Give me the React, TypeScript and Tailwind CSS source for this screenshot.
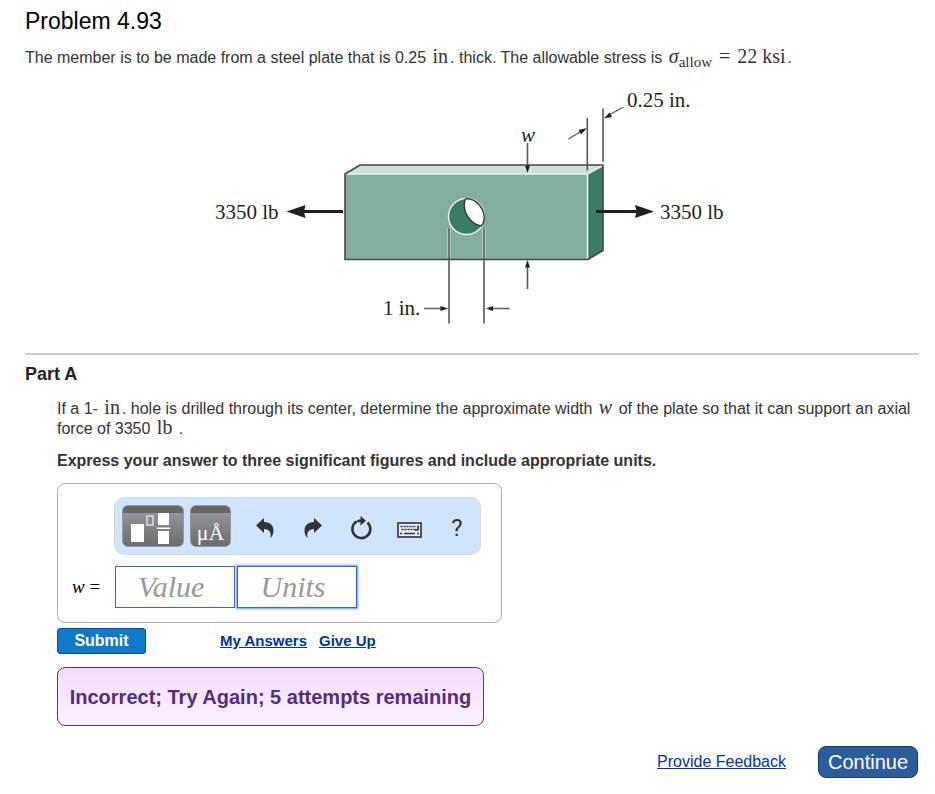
import type { ReactNode } from "react";

const serif = "font-['Liberation_Serif',serif]";

function Roman({ children }: { children: ReactNode }) {
  return <span className={`${serif} mx-[2px] text-[20px] leading-[0px]`}>{children}</span>;
}

function PlateDiagram() {
  const thin = { stroke: "#5a5758", strokeWidth: 1.6, fill: "none" };
  const label = "font-['Liberation_Serif',serif] text-[21px]";
  return (
    <svg
      role="img"
      aria-label="Steel plate with a central hole under axial load"
      viewBox="214 82 516 248"
      className="w-[516px] h-[248px] max-w-full"
    >
      {/* plate faces */}
      <path d="M345 174 L360 165 H603 L588 174 Z" fill="#cfe0d8" />
      <path d="M345 174 H588 V259.500 H345 Z" fill="#82ae9d" />
      <path d="M588 174 L603 165 V250.500 L588 259.500 Z" fill="#3a7d66" />
      <path d="M345 174 H587.500 L603 165.500 M587.500 174 V259" stroke="#edf5f1" strokeWidth="1.600" fill="none" />
      <path d="M345 174 L360 165 H603 V250.500 L588 259.500 H345 Z" stroke="#4a4546" strokeWidth="1.600" fill="none" />
      {/* hole */}
      <circle cx="466.500" cy="216.500" r="18" fill="#3a7d66" stroke="#e4f0ea" strokeWidth="1.500" />
      <path d="M466 198.500 C476 198.500 486 209 484 221 Q483 225 480.500 226 C469 223 462 211 465 200 Z" fill="#fff" stroke="#3f3b3c" strokeWidth="1.500" />
      {/* hole width */}
      <path d="M449 228 V258 M484 228 V258" stroke="#d5e5dd" strokeWidth="3" />
      <path d="M449 228 V323.500 M484 228 V323.500" {...thin} />
      <path d="M424 308.500 H445 M509.500 308.500 H490" {...thin} strokeWidth="1.300" />
      <path d="M448 308.500 L440.500 306 V311 Z M486 308.500 L493 306 V311 Z" fill="#231f20" />
      {/* height w */}
      <path d="M527.500 143 V168 M527.500 289 V264" {...thin} />
      <path d="M527.500 173 L525 165.500 H530 Z M527.500 260 L525 267.500 H530 Z" fill="#231f20" />
      {/* thickness */}
      <path d="M587.300 118 V170.500 M603 108.500 V162" {...thin} />
      <path d="M568.500 139 L580 132 M623.500 107 L610 114.500" {...thin} strokeWidth="1.400" />
      <path d="M587 128 L578.500 130 L581 134.500 Z M604 118.500 L609.500 112.500 L612 117 Z" fill="#231f20" />
      {/* axial forces */}
      <path d="M343 211.500 H303 M596 211.500 H637" stroke="#231f20" strokeWidth="3" />
      <path d="M286.500 211.500 L305.500 205 L304 211.500 L305.500 218 Z M654 211.500 L635 205 L636.500 211.500 L635 218 Z" fill="#231f20" />
      <g fill="#231f20" className={label}>
        <text x="627" y="107">0.25 in.</text>
        <text x="215" y="219">3350 lb</text>
        <text x="660" y="219">3350 lb</text>
        <text x="383" y="315">1 in.</text>
        <text x="521" y="142" fontStyle="italic">w</text>
      </g>
    </svg>
  );
}

function TemplateIcon() {
  return (
    <svg viewBox="0 0 60 40" className="w-[60px] h-[40px]" aria-hidden="true">
      <path d="M8 18h13v18H8z M35 7h11v12H35z M35 25h11v13H35z M34 21.500h13v1.500H34z" fill="#fff" />
      <path d="M24 10h6v9h-6z" fill="none" stroke="#ddd" strokeWidth="1.500" />
    </svg>
  );
}

function TurnArrow({ flip = false }: { flip?: boolean }) {
  return (
    <svg viewBox="0 0 18 20" className={`w-[18px] h-[20px] ${flip ? "-scale-x-100" : ""}`} aria-hidden="true">
      <path d="M0 7.500 L8 0 V4 C14 4 17.500 7.500 17.500 12.500 C17.500 15.500 16.500 18 14.500 20 C15.500 14.500 13.500 11 8 11 V15 Z" fill="#333" />
    </svg>
  );
}

function ResetIcon() {
  return (
    <svg viewBox="0 0 22 24" className="w-[22px] h-[24px]" aria-hidden="true">
      <path d="M6.500 5.500 A9 9 0 1 0 17.500 6.500" fill="none" stroke="#333" strokeWidth="2.600" />
      <path d="M10.500 0 L16 4.800 L10.500 9.500 V6.200 H5 L8.500 3.600 H10.500 Z" fill="#333" />
    </svg>
  );
}

function KeyboardIcon() {
  return (
    <svg viewBox="0 0 25 16" className="w-[25px] h-[16px]" aria-hidden="true">
      <rect x="1" y="1" width="23" height="14" fill="#e6f1ff" stroke="#444" strokeWidth="1.800" />
      <path d="M3.500 4.500 H19 M4.500 7.500 H19" stroke="#333" strokeWidth="1.700" strokeDasharray="2 1" />
      <path d="M3 11.500 H5 M7 11.500 H18 M20 11.500 H22" stroke="#333" strokeWidth="1.700" />
      <path d="M21 3.500 V8 H18" stroke="#333" strokeWidth="1.700" fill="none" />
    </svg>
  );
}

const darkKey =
  "flex items-center justify-center h-[42px] rounded-md border border-[#999] bg-[linear-gradient(#666_0_7px,#95939b_7px,#6c6c6c)] text-white";
const plainKey = "flex items-center justify-center w-[32px] h-[42px] pt-[3px]";
const field =
  "w-[120px] h-[42px] border border-[#3366cc] bg-white pr-2 text-center italic text-[30px] leading-none text-[#333] placeholder:text-[#999] outline-none";

export default function App() {
  return (
    <main className="pl-[25px] pr-4 pt-2 pb-4 bg-white font-['Liberation_Sans',Arial,sans-serif] text-[16px] leading-5 text-[#333]">
      <h1 className="text-[23px] leading-[26px] text-black">Problem 4.93</h1>
      <p className="mt-[14px]">
        The member is to be made from a steel plate that is 0.25 <Roman>in</Roman>. thick. The allowable stress is{" "}
        <Roman>
          <i>σ</i>
          <sub className="text-[15px] leading-[0px]">allow</sub> <span className="mx-[2px]">=</span> 22 ksi
        </Roman>
        .
      </p>
      <div className="flex justify-center mt-[14px]">
        <PlateDiagram />
      </div>

      <section className="mt-[23px] border-t-2 border-[#ccc] pt-[9px]">
        <h2 className="text-[18px] leading-5 font-bold text-[#222]">Part A</h2>
        <div className="pl-8 mt-[15px]">
          <p>
            If a 1- <Roman>in</Roman>. hole is drilled through its center, determine the approximate width{" "}
            <Roman>
              <i>w</i>
            </Roman>{" "}
            of the plate so that it can support an axial force of 3350 <Roman>lb</Roman> .
          </p>
          <p className="mt-3 font-bold">Express your answer to three significant figures and include appropriate units.</p>

          <form onSubmit={(e) => e.preventDefault()}>
            <div className="mt-3 w-[445px] max-w-full rounded-lg border border-[#aaa] pt-[13px] pb-[14px] pl-[14px] pr-5">
              <div
                role="toolbar"
                aria-label="Equation tools"
                className="ml-[42px] flex items-center h-[58px] rounded-[10px] border border-[#d6dce4] bg-[#cfe5ff] px-[7px]"
              >
                <button type="button" aria-label="Templates" className={`${darkKey} w-[62px]`}>
                  <TemplateIcon />
                </button>
                <button type="button" aria-label="Units symbols" className={`${darkKey} ml-[6px] w-[41px] pt-[14px] ${serif} text-[22px] leading-none`}>
                  μÅ
                </button>
                <div className="ml-[18px] flex gap-4">
                  <button type="button" aria-label="Undo" className={plainKey}>
                    <TurnArrow />
                  </button>
                  <button type="button" aria-label="Redo" className={plainKey}>
                    <TurnArrow flip />
                  </button>
                  <button type="button" aria-label="Reset" className={plainKey}>
                    <ResetIcon />
                  </button>
                  <button type="button" aria-label="Keyboard shortcuts" className="flex items-center justify-center w-[32px] h-[42px] pt-2">
                    <KeyboardIcon />
                  </button>
                  <button type="button" aria-label="Help" className={`${plainKey} font-[Roboto,sans-serif] text-[24px] leading-none`}>
                    ?
                  </button>
                </div>
              </div>
              <div className={`mt-[11px] flex items-center ${serif}`}>
                <label htmlFor="value" className="w-[43px] text-[19px] text-black">
                  <i>w</i> =
                </label>
                <input id="value" placeholder="Value" className={field} />
                <input
                  aria-label="Units"
                  placeholder="Units"
                  className={`${field} ml-[2px] shadow-[0_0_2px_1px_#6a93e6]`}
                />
              </div>
            </div>
            <div className="mt-[5px] flex items-center font-bold">
              <button type="submit" className="w-[89px] h-[26px] rounded-[3px] border border-[#0b4f86] bg-[#1079c9] leading-none text-white">
                Submit
              </button>
              <a href="#answers" className="ml-[74px] text-[15px] text-[#003399] underline">
                My Answers
              </a>
              <a href="#give-up" className="ml-3 text-[15px] text-[#003399] underline">
                Give Up
              </a>
            </div>
          </form>

          <div
            role="status"
            className="mt-[13px] flex w-[427px] max-w-full h-[59px] items-center justify-center rounded-lg border border-[#662d91] bg-[linear-gradient(#f2dcff,#fdf2ff)] text-[20px] font-bold text-[#552d7a]"
          >
            Incorrect; Try Again; 5 attempts remaining
          </div>
        </div>
      </section>

      <footer className="mt-5 flex items-center justify-end gap-8 pr-px">
        <a href="#feedback" className="text-[#003399] underline">
          Provide Feedback
        </a>
        <button type="button" className="w-[100px] h-8 rounded-lg border border-[#123a70] bg-[#2b5c9b] text-[20px] leading-none text-white">
          Continue
        </button>
      </footer>
    </main>
  );
}
